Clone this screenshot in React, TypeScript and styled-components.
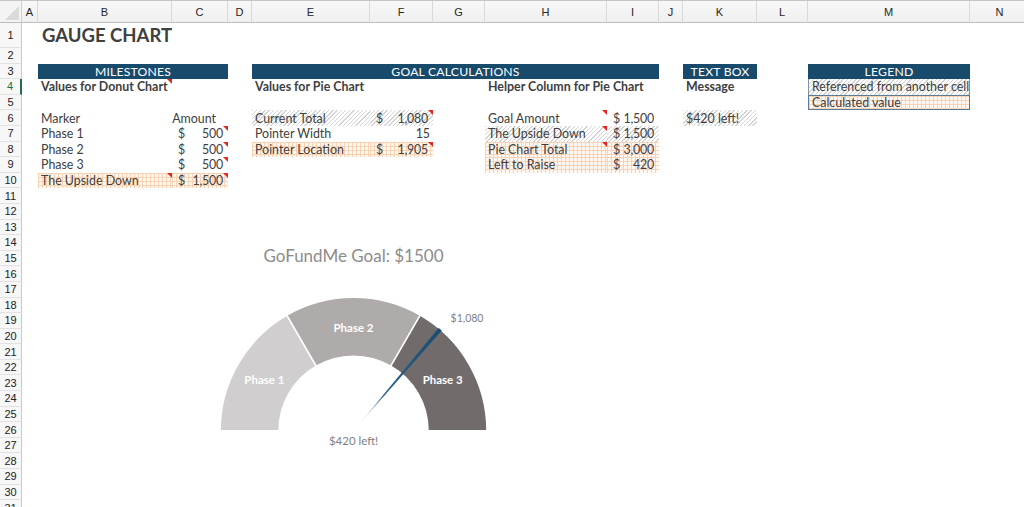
import React from "react";
import styled, { createGlobalStyle, css } from "styled-components";

const LETTERS = "ABCDEFGHIJKLMN";
const COL_WIDTHS = [16, 134, 56, 24, 118, 63, 52, 122, 52, 24, 74, 51, 162, 60];
const ROWS = 31;

const col = (c: string) => LETTERS.indexOf(c) + 2;

const GlobalStyle = createGlobalStyle`
  html, body {
    margin: 0;
    padding: 0;
    background: #fff;
  }
  body {
    font-family: "Lato", "Liberation Sans", sans-serif;
    color: #404040;
    overflow: hidden;
  }
`;

const Sheet = styled.div`
  display: grid;
  grid-template-columns: 22px ${COL_WIDTHS.map((w) => `${w}px`).join(" ")};
  grid-template-rows: 22px 25px repeat(${ROWS - 1}, 15.6px);
  width: 1024px;
  height: 507px;
  overflow: hidden;
  border-top: 1px solid #c6c6c6;
  box-sizing: border-box;
`;

const Corner = styled.div`
  grid-column: 1;
  grid-row: 1;
  background: #f4f4f4;
  border-right: 1px solid #cfcfcf;
  border-bottom: 1px solid #bdbdbd;
  position: relative;
  &::after {
    content: "";
    position: absolute;
    right: 2px;
    bottom: 2px;
    border-bottom: 14px solid #dadada;
    border-left: 14px solid transparent;
  }
`;

const ColHead = styled.div<{ $c: number }>`
  grid-column: ${(p) => p.$c};
  grid-row: 1;
  display: flex;
  align-items: center;
  justify-content: center;
  background: linear-gradient(#f8f8f8, #efefef);
  border-right: 1px solid #d9d9d9;
  border-bottom: 1px solid #bdbdbd;
  font-family: "Liberation Sans", sans-serif;
  font-size: 11px;
  color: #262626;
`;

const RowHead = styled.div<{ $r: number; $active?: boolean }>`
  grid-column: 1;
  grid-row: ${(p) => p.$r + 1};
  display: flex;
  align-items: center;
  justify-content: center;
  background: #f7f7f7;
  border-right: 1px solid #c9c9c9;
  border-bottom: 1px solid #e2e2e2;
  font-family: "Liberation Sans", sans-serif;
  font-size: 11px;
  color: #222;
  box-sizing: border-box;
  ${(p) =>
    p.$active &&
    css`
      color: #1e7145;
      border-right: 2px solid #1e7145;
    `}
`;

const hatch = css`
  background-color: #fff;
  background-image: repeating-linear-gradient(
    135deg,
    #d4d4d4 0 1px,
    transparent 1px 3px
  );
`;

const gridFill = css`
  background-color: #fff8f2;
  background-image: linear-gradient(#f9d2b4 1px, transparent 1px),
    linear-gradient(90deg, #f9d2b4 1px, transparent 1px);
  background-size: 4px 4px;
`;

type Fill = "hatch" | "grid";

const Cell = styled.div<{
  $c: string;
  $r: number;
  $span?: number;
  $fill?: Fill;
  $bold?: boolean;
  $size?: number;
  $right?: boolean;
}>`
  grid-column: ${(p) => `${col(p.$c)} / span ${p.$span ?? 1}`};
  grid-row: ${(p) => p.$r + 1};
  position: relative;
  display: flex;
  align-items: center;
  justify-content: ${(p) => (p.$right ? "flex-end" : "flex-start")};
  padding: 0 3px;
  font-size: ${(p) => p.$size ?? 12.4}px;
  font-weight: ${(p) => (p.$bold ? 700 : 400)};
  line-height: 15px;
  white-space: nowrap;
  overflow: visible;
  min-width: 0;
  ${(p) => p.$fill === "hatch" && hatch}
  ${(p) => p.$fill === "grid" && gridFill}
`;

const Money = styled(Cell)`
  justify-content: space-between;
  padding: 0 5px 0 6px;
  letter-spacing: -0.2px;
`;

const HeaderBar = styled.div<{ $c: string; $span?: number }>`
  grid-column: ${(p) => `${col(p.$c)} / span ${p.$span ?? 1}`};
  grid-row: 4;
  display: flex;
  align-items: center;
  justify-content: center;
  background: #184a6c;
  color: #fff;
  font-size: 12.2px;
  letter-spacing: 0.2px;
`;

const LegendCell = styled(Cell)<{ $strong?: boolean }>`
  border-left: 1px solid #7d93a8;
  border-right: 1px solid #7d93a8;
  ${(p) =>
    p.$strong &&
    css`
      border: 1px solid #587b9a;
    `}
`;

const Flag = styled.span`
  position: absolute;
  top: 0;
  right: 0;
  border-top: 5px solid #e5271f;
  border-left: 5px solid transparent;
`;

const ChartBox = styled.div`
  grid-column: ${col("C")} / ${col("J")};
  grid-row: 15 / 31;
  svg {
    display: block;
    width: 100%;
    height: 100%;
    font-family: "Lato", "Liberation Sans", sans-serif;
  }
`;

const milestones = [
  { name: "Phase 1", amount: 500 },
  { name: "Phase 2", amount: 500 },
  { name: "Phase 3", amount: 500 },
];
const goal = 1500;
const current = 1080;
const pointerWidth = 15;
const fmt = (n: number) => n.toLocaleString("en-US");

const CX = 353.5;
const CY = 430;
const RO = 133.5;
const RI = 74.5;

const xy = (deg: number, r: number) => {
  const a = (deg * Math.PI) / 180;
  return [CX + r * Math.cos(a), CY - r * Math.sin(a)];
};
const pt = (deg: number, r: number) =>
  xy(deg, r)
    .map((v) => v.toFixed(2))
    .join(" ");

const ring = (a1: number, a2: number) =>
  `M${pt(a1, RO)} A${RO} ${RO} 0 0 1 ${pt(a2, RO)} L${pt(a2, RI)} A${RI} ${RI} 0 0 0 ${pt(a1, RI)} Z`;

const phaseColors = ["#d0cecf", "#afabaa", "#716c6b"];

const Gauge = () => {
  let acc = 0;
  const segs = milestones.map((m, i) => {
    const a1 = 180 - (acc / goal) * 180;
    acc += m.amount;
    const a2 = 180 - (acc / goal) * 180;
    const [lx, ly] = xy((a1 + a2) / 2, 103);
    return { ...m, a1, a2, color: phaseColors[i], lx, ly: ly + 4.5 };
  });
  const p1 = 180 - (current / goal) * 180;
  const p2 = 180 - ((current + pointerWidth) / goal) * 180;
  const tip = xy((p1 + p2) / 2, RO);

  return (
    <svg viewBox="172 234.2 487 249.6">
      <defs>
        <linearGradient
          id="needle"
          gradientUnits="userSpaceOnUse"
          x1={CX}
          y1={CY}
          x2={tip[0]}
          y2={tip[1]}
        >
          <stop offset="0" stopColor="#ffffff" stopOpacity="0" />
          <stop offset="0.35" stopColor="#2e6189" />
          <stop offset="1" stopColor="#1a4c71" />
        </linearGradient>
      </defs>
      <text x={CX} y={261} textAnchor="middle" fontSize="17" fill="#8c8c8c">
        GoFundMe Goal: ${goal}
      </text>
      {segs.map((s) => (
        <path key={s.name} d={ring(s.a1, s.a2)} fill={s.color} stroke="#fff" strokeWidth="1.5" />
      ))}
      {segs.map((s) => (
        <text
          key={s.name + "l"}
          x={s.lx}
          y={s.ly}
          textAnchor="middle"
          fontSize="11.5"
          fontWeight="700"
          fill="#fff"
        >
          {s.name}
        </text>
      ))}
      <path
        d={`M${CX} ${CY} L${pt(p1, RO)} A${RO} ${RO} 0 0 1 ${pt(p2, RO)} Z`}
        fill="url(#needle)"
      />
      <text x={467} y={321} textAnchor="middle" fontSize="10.5" fill="#7f7f7f">
        ${fmt(current)}
      </text>
      <text x={CX} y={444} textAnchor="middle" fontSize="11.5" fill="#7f7f7f">
        ${goal - current} left!
      </text>
    </svg>
  );
};

const App = () => {
  const upside = milestones.reduce((s, m) => s + m.amount, 0);
  const pieTotal = goal + upside;
  const pointerLocation = pieTotal - current - pointerWidth;
  const left = goal - current;

  return (
    <>
      <GlobalStyle />
      <Sheet>
        <Corner />
        {LETTERS.split("").map((l) => (
          <ColHead key={l} $c={col(l)}>
            {l}
          </ColHead>
        ))}
        {Array.from({ length: ROWS }, (_, i) => (
          <RowHead key={i} $r={i + 1} $active={i + 1 === 4}>
            {i + 1}
          </RowHead>
        ))}

        <Cell $c="B" $r={1} $span={2} $bold $size={18.5} style={{ paddingLeft: 4 }}>
          GAUGE CHART
        </Cell>

        <HeaderBar $c="B" $span={2}>MILESTONES</HeaderBar>
        <HeaderBar $c="E" $span={5}>GOAL CALCULATIONS</HeaderBar>
        <HeaderBar $c="K">TEXT BOX</HeaderBar>
        <HeaderBar $c="M">LEGEND</HeaderBar>

        <Cell $c="B" $r={4} $bold>
          Values for Donut Chart
          <Flag />
        </Cell>
        <Cell $c="E" $r={4} $bold>Values for Pie Chart</Cell>
        <Cell $c="H" $r={4} $span={2} $bold>Helper Column for Pie Chart</Cell>
        <Cell $c="K" $r={4} $bold>Message</Cell>
        <LegendCell $c="M" $r={4} $fill="hatch">Referenced from another cell</LegendCell>
        <LegendCell $c="M" $r={5} $fill="grid" $strong>Calculated value</LegendCell>

        <Cell $c="B" $r={6}>Marker</Cell>
        <Cell $c="C" $r={6} $right style={{ paddingRight: 12 }}>Amount</Cell>
        {milestones.map((m, i) => (
          <React.Fragment key={m.name}>
            <Cell $c="B" $r={7 + i}>{m.name}</Cell>
            <Money $c="C" $r={7 + i}>
              <span>$</span>
              <span>{fmt(m.amount)}</span>
              <Flag />
            </Money>
          </React.Fragment>
        ))}
        <Cell $c="B" $r={10} $fill="grid">
          The Upside Down
          <Flag />
        </Cell>
        <Money $c="C" $r={10} $fill="grid">
          <span>$</span>
          <span>{fmt(upside)}</span>
          <Flag />
        </Money>

        <Cell $c="E" $r={6} $fill="hatch">Current Total</Cell>
        <Money $c="F" $r={6} $fill="hatch">
          <span>$</span>
          <span>{fmt(current)}</span>
          <Flag />
        </Money>
        <Cell $c="E" $r={7}>Pointer Width</Cell>
        <Cell $c="F" $r={7} $right>{pointerWidth}</Cell>
        <Cell $c="E" $r={8} $fill="grid">Pointer Location</Cell>
        <Money $c="F" $r={8} $fill="grid">
          <span>$</span>
          <span>{fmt(pointerLocation)}</span>
          <Flag />
        </Money>

        <Cell $c="H" $r={6}>
          Goal Amount
          <Flag />
        </Cell>
        <Money $c="I" $r={6}>
          <span>$</span>
          <span>{fmt(goal)}</span>
        </Money>
        <Cell $c="H" $r={7} $fill="hatch">
          The Upside Down
          <Flag />
        </Cell>
        <Money $c="I" $r={7} $fill="hatch">
          <span>$</span>
          <span>{fmt(upside)}</span>
        </Money>
        <Cell $c="H" $r={8} $fill="grid">
          Pie Chart Total
          <Flag />
        </Cell>
        <Money $c="I" $r={8} $fill="grid">
          <span>$</span>
          <span>{fmt(pieTotal)}</span>
        </Money>
        <Cell $c="H" $r={9} $fill="grid">Left to Raise</Cell>
        <Money $c="I" $r={9} $fill="grid">
          <span>$</span>
          <span>{fmt(left)}</span>
        </Money>

        <Cell $c="K" $r={6} $fill="hatch">${left} left!</Cell>

        <ChartBox>
          <Gauge />
        </ChartBox>
      </Sheet>
    </>
  );
};

export default App;
